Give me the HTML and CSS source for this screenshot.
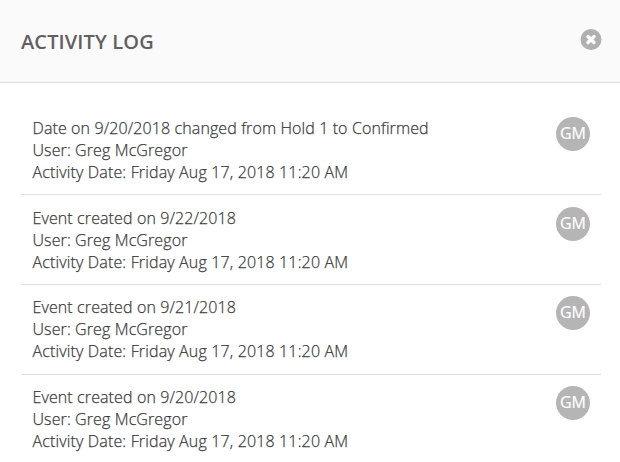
FILE: index.html
```html
<!DOCTYPE html>
<html lang="en">
<head>
<meta charset="utf-8">
<title>Activity Log</title>
<link rel="stylesheet" href="styles.css">
</head>
<body>
<header class="header">
<h1 class="title">ACTIVITY LOG</h1>
<button class="close" aria-label="Close"><svg width="22" height="22" viewBox="0 0 22 22"><circle cx="11" cy="11.5" r="10.5" fill="#b0b0b0"/><path d="M8 8.5l6 6M14 8.5l-6 6" stroke="#fff" stroke-width="3.4" stroke-linecap="round"/></svg></button>
</header>
<main class="log">
<article class="entry"><div class="details"><p>Date on 9/20/2018 changed from Hold 1 to Confirmed</p><p>User: Greg McGregor</p><p class="date">Activity Date: Friday Aug 17, 2018 11:20 AM</p></div><span class="avatar">GM</span></article>
<article class="entry"><div class="details"><p>Event created on 9/22/2018</p><p>User: Greg McGregor</p><p class="date">Activity Date: Friday Aug 17, 2018 11:20 AM</p></div><span class="avatar">GM</span></article>
<article class="entry tight"><div class="details"><p>Event created on 9/21/2018</p><p>User: Greg McGregor</p><p class="date">Activity Date: Friday Aug 17, 2018 11:20 AM</p></div><span class="avatar">GM</span></article>
<article class="entry tight"><div class="details"><p>Event created on 9/20/2018</p><p>User: Greg McGregor</p><p class="date">Activity Date: Friday Aug 17, 2018 11:20 AM</p></div><span class="avatar">GM</span></article>
</main>
</body>
</html>
```
FILE: styles.css
```css
* { box-sizing: border-box; }
body { margin: 0; height: 462px; overflow: hidden; background: #fff; color: #3c3c3c; font-family: "Open Sans", sans-serif; }
.header { display: flex; align-items: center; justify-content: space-between; height: 83px; padding: 0 18px 0 21px; background: #fafafa; border-bottom: 1px solid #ddd; }
.title { margin: 2px 0 0; font-size: 20px; line-height: 26px; font-weight: 600; letter-spacing: .12px; color: #606060; }
.close { display: flex; margin: 0 0 4px; padding: 0; border: 0; background: none; }
.log { padding: 22px 19px 0 21px; }
.entry { display: flex; justify-content: space-between; height: 90px; padding: 12px 11px 0 11.5px; border-bottom: 1px solid #ddd; }
.entry.tight { padding-top: 11px; }
.details p { margin: 0; font-size: 16px; line-height: 22px; font-weight: 300; letter-spacing: .11px; -webkit-text-stroke: .25px currentColor; }
.details .date { letter-spacing: .15px; }
.avatar { display: flex; align-items: center; justify-content: center; width: 34px; height: 34px; padding-bottom: 2px; border-radius: 50%; background: #b5b5b5; color: #fff; font-size: 16px; -webkit-text-stroke: .2px currentColor; }
```
